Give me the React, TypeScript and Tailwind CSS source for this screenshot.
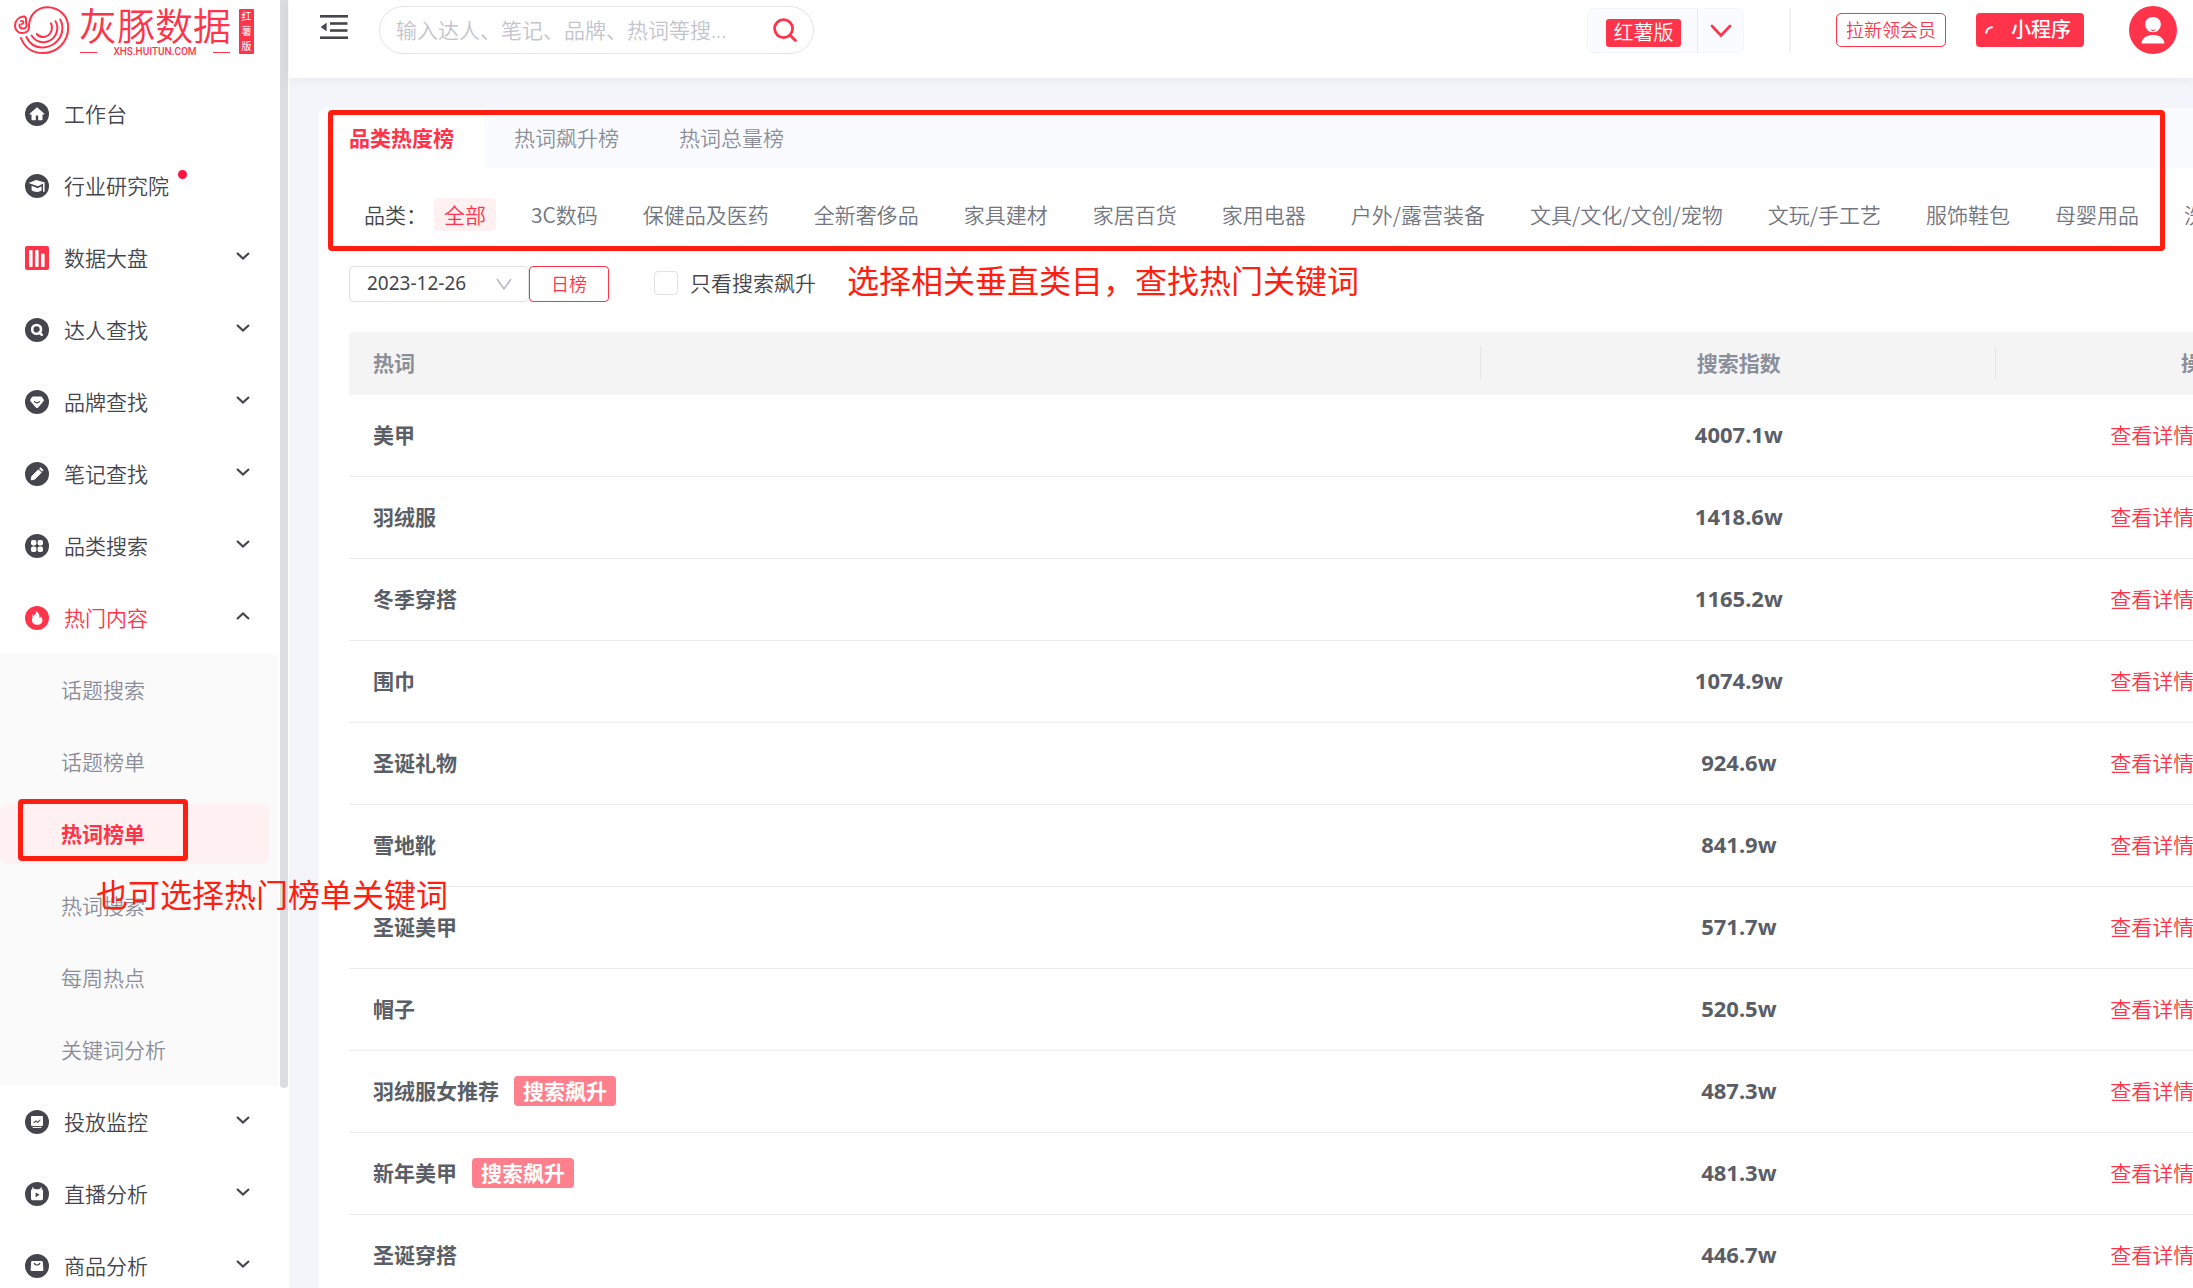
import React from "react";

type MenuItem = {
  label: string;
  icon: React.ReactNode;
  dot?: boolean;
  arrow?: boolean;
  children?: string[];
};

const Round = ({ color = "#45464d", children }: { color?: string; children: React.ReactNode }) => (
  <svg className="size-6 shrink-0" viewBox="0 0 24 24" fill="none">
    <circle cx="12" cy="12" r="12" fill={color} />
    {children}
  </svg>
);

const menu: MenuItem[] = [
  {
    label: "工作台",
    icon: (
      <Round>
        <path d="M12 5.2 4.9 11.4c-.4.5-.2 1 .4 1h1.2v4.8c0 .7.3 1 1 1h3.3v-4.7h2.4v4.7h3.3c.7 0 1-.3 1-1v-4.8h1.2c.6 0 .8-.5.4-1z" fill="#fff" />
      </Round>
    ),
  },
  {
    label: "行业研究院",
    dot: true,
    icon: (
      <Round>
        <path d="M3.6 9 11 6l9 2.6-7 3.6z" fill="#fff" />
        <path d="M6.6 11.8v4.4c2.6 2 7.4 2.4 10 .4v-4.4l-4 2z" fill="#fff" />
        <path d="M18.8 9.4v7.8" stroke="#fff" strokeWidth="1.6" strokeLinecap="round" />
      </Round>
    ),
  },
  {
    label: "数据大盘",
    arrow: true,
    icon: (
      <svg className="size-6 shrink-0" viewBox="0 0 24 24">
        <rect width="24" height="24" rx="2" fill="#ff3349" />
        <rect x="4" y="4" width="3.6" height="17" rx="1" fill="#fff" />
        <rect x="10" y="4" width="3.6" height="17" rx="1" fill="#fff" />
        <rect x="16" y="7.4" width="3.6" height="13.6" rx="1" fill="#fff" />
      </svg>
    ),
  },
  {
    label: "达人查找",
    arrow: true,
    icon: (
      <Round>
        <circle cx="11.6" cy="11.4" r="4.4" stroke="#fff" strokeWidth="2.6" />
        <path d="m14.4 14.4 2.4 2.4" stroke="#fff" strokeWidth="2.6" strokeLinecap="round" />
      </Round>
    ),
  },
  {
    label: "品牌查找",
    arrow: true,
    icon: (
      <Round>
        <path d="M8.2 6.4h7.6c.5 0 .9.2 1.2.6l1.6 2.6c.4.6.3 1.2-.1 1.7l-5.3 6.2c-.7.8-1.7.8-2.4 0l-5.3-6.2c-.4-.5-.5-1.1-.1-1.7L7 7c.3-.4.7-.6 1.2-.6z" fill="#fff" />
        <path d="M9.4 11.6c1.5 1.7 3.7 1.7 5.2 0" stroke="#45464d" strokeWidth="1.2" strokeLinecap="round" />
      </Round>
    ),
  },
  {
    label: "笔记查找",
    arrow: true,
    icon: (
      <Round>
        <path d="m6.2 17.8.6-3.4 6.6-6.6 2.8 2.8-6.6 6.6z" fill="#fff" stroke="#fff" strokeLinejoin="round" />
        <path d="m14.6 6.6 1-.8 2.4 2.4-.8 1z" fill="#fff" stroke="#fff" strokeLinejoin="round" />
      </Round>
    ),
  },
  {
    label: "品类搜索",
    arrow: true,
    icon: (
      <Round>
        <g fill="#fff">
          <rect x="6" y="6" width="5.4" height="5.4" rx="1.8" />
          <rect x="12.6" y="6" width="5.4" height="5.4" rx="1.8" />
          <rect x="6" y="12.6" width="5.4" height="5.4" rx="1.8" />
          <rect x="12.6" y="12.6" width="5.4" height="5.4" rx="1.8" />
        </g>
      </Round>
    ),
  },
  {
    label: "热门内容",
    arrow: true,
    icon: (
      <Round color="#ff3349">
        <path d="M11.2 5.2c.3 2.2-1.2 3.2-2.6 4.8-2.8 3.2-2.2 8.8 3.4 8.8s6.8-5 4-8.4c-.3.9-.7 1.4-1.5 1.6.4-2.8-.8-5.6-3.3-6.8z" fill="#fff" />
        <path d="M8.3 8.4c-.9.7-.9 1.5-.7 2.2" stroke="#fff" strokeLinecap="round" />
      </Round>
    ),
    children: ["话题搜索", "话题榜单", "热词榜单", "热词搜索", "每周热点", "关键词分析"],
  },
  {
    label: "投放监控",
    arrow: true,
    icon: (
      <Round>
        <rect x="6" y="6" width="12" height="10" rx="1" fill="#fff" />
        <path d="M8 17.4h8" stroke="#fff" strokeLinecap="round" />
        <path d="m9 12.6 2-1.6 1.8 1.4 2.2-2.4" stroke="#45464d" strokeWidth="1.1" strokeLinecap="round" strokeLinejoin="round" />
      </Round>
    ),
  },
  {
    label: "直播分析",
    arrow: true,
    icon: (
      <Round>
        <rect x="6" y="7.2" width="12" height="11" rx="1.4" fill="#fff" />
        <path d="m7.6 6 1.6 1.6M16.4 6l-1.6 1.6" stroke="#fff" strokeWidth="1.2" strokeLinecap="round" />
        <path d="m10.6 10.4 4 2.4-4 2.4z" fill="#45464d" />
      </Round>
    ),
  },
  {
    label: "商品分析",
    arrow: true,
    icon: (
      <Round>
        <path d="M7.2 7h9.6c.6 0 .9.3 1 .8l.6 8c0 .7-.3 1.1-1 1.1H6.6c-.7 0-1-.4-1-1.1l.6-8c.1-.5.4-.8 1-.8z" fill="#fff" />
        <path d="M9.2 9.2c.8 2.4 4.8 2.4 5.6 0" stroke="#45464d" strokeWidth="1.2" strokeLinecap="round" />
      </Round>
    ),
  },
];

const tabs = ["品类热度榜", "热词飙升榜", "热词总量榜"];

const categories = [
  "全部",
  "3C数码",
  "保健品及医药",
  "全新奢侈品",
  "家具建材",
  "家居百货",
  "家用电器",
  "户外/露营装备",
  "文具/文化/文创/宠物",
  "文玩/手工艺",
  "服饰鞋包",
  "母婴用品",
  "洗护",
];

const rows = [
  { word: "美甲", index: "4007.1w" },
  { word: "羽绒服", index: "1418.6w" },
  { word: "冬季穿搭", index: "1165.2w" },
  { word: "围巾", index: "1074.9w" },
  { word: "圣诞礼物", index: "924.6w" },
  { word: "雪地靴", index: "841.9w" },
  { word: "圣诞美甲", index: "571.7w" },
  { word: "帽子", index: "520.5w" },
  { word: "羽绒服女推荐", index: "487.3w", rising: true },
  { word: "新年美甲", index: "481.3w", rising: true },
  { word: "圣诞穿搭", index: "446.7w" },
];

function Chevron({ up }: { up?: boolean }) {
  return (
    <svg className="h-2 w-3.5" viewBox="0 0 14 8" fill="none" stroke="#45464d" strokeWidth="2.2">
      <path d={up ? "m1 7 6-5.5L13 7" : "m1 1 6 5.5L13 1"} />
    </svg>
  );
}

function Logo() {
  return (
    <a href="#" className="flex h-[78px] items-start pt-[6px] pl-3.5 text-[#ff3349]">
      {/* dolphin */}
      <svg className="h-12 w-14 shrink-0" viewBox="0 0 56 48" fill="none" stroke="currentColor" strokeWidth="2" strokeLinecap="round">
        <path d="M15 20.5C15 9 23 1.2 33.5 1.2 45 1.2 54.2 10 54.2 21.5 54.2 36 43 47 29 47 18 47 10.5 41 6.9 32" />
        <path d="M15 20.5c.4 4.5-3 6.5-7 6.5-4.2 0-7-3.4-7-7.2 0-5.3 3.6-8.6 8.6-9.2 2.2-.2 2.4 1.4 2.4 3.2v1.7c-.1 1.5.6 2.5.6 3.7 0 2-1.8 3.4-4 3.4-2.3 0-3.4-1.9-3-4" />
        <path d="M6.8 15.2c1.4-.8 2.8.1 2.6 1.5-.1 1-1 1.4-1.9 1.5" strokeWidth="1.8" />
        <path d="M12.4 31C15.5 38 21.7 41.6 29 41.4 41 41 49 31.5 48.4 20.5c-.2-2.5-1-5-2.2-7" />
        <path d="M17.6 29.5c3 4.8 7 7 12.4 6.7 8.5-.5 13.8-7.7 13.3-15.7-.2-2-.8-3.8-1.8-5.3" />
        <path d="M22.8 28c2.2 2.6 5 3.5 8.2 2.8 4.8-1 7.4-5.6 6.9-10.3-.2-1.3-.5-2.3-1-3.2" />
      </svg>
      <div className="ml-[10px] flex w-[150px] flex-col">
        <span className="-ml-px text-[38px] leading-[38px] font-[350] whitespace-nowrap">灰豚数据</span>
        <span className="mt-[3px] flex items-center justify-between font-['Roboto',sans-serif] text-[10px] leading-[10px] font-medium">
          <i className="h-px w-[17px] bg-current" />
          XHS.HUITUN.COM
          <i className="h-px w-[17px] bg-current" />
        </span>
      </div>
      <span className="mt-[3px] ml-[9px] flex h-[45px] w-[15px] flex-col items-center justify-around rounded-[1px] bg-[#ff3349] text-[10px] leading-[13px] text-white">
        <b className="font-normal">红</b>
        <b className="font-normal">薯</b>
        <b className="font-normal">版</b>
      </span>
    </a>
  );
}

function Sidebar() {
  return (
    <aside className="flex w-[289px] shrink-0 justify-between bg-white">
      <nav className="w-[278px]">
        <Logo />
        <ul>
          {menu.map((item) => (
            <li key={item.label}>
              <button className="flex h-[72px] w-full items-center pr-7 pl-[25px] text-left">
                {item.icon}
                <span className={`relative ml-[15px] ${item.children ? "text-[#ff3349]" : "text-[#45464d]"}`}>
                  {item.label}
                  {item.dot && <i className="absolute -top-px -right-[18px] size-[9px] rounded-full bg-[#ff1440]" />}
                </span>
                {item.arrow && (
                  <span className="ml-auto pb-1">
                    <Chevron up={!!item.children} />
                  </span>
                )}
              </button>
              {item.children && (
                <ul className="bg-[#fafafa]">
                  {item.children.map((child) =>
                    child === "热词榜单" ? (
                      <li key={child} className="relative py-[6px]">
                        <a href="#" className="flex h-[60px] w-[269px] items-center rounded-lg bg-[#fff0f1] pl-[61px] font-bold text-[#ff3349]">
                          {child}
                        </a>
                        <div className="pointer-events-none absolute top-px left-[18px] z-10 h-[62px] w-[170px] rounded-[4px] border-[5px] border-[#ff1e10]" />
                        <p className="pointer-events-none absolute top-[73px] left-24 z-10 text-[32px] leading-[48px] font-normal whitespace-nowrap text-[#ff1e10]">
                          也可选择热门榜单关键词
                        </p>
                      </li>
                    ) : (
                      <li key={child}>
                        <a href="#" className="flex h-[72px] items-center pl-[61px] text-[#8b8e99]">
                          {child}
                        </a>
                      </li>
                    )
                  )}
                </ul>
              )}
            </li>
          ))}
        </ul>
      </nav>
      {/* scroll thumb */}
      <div className="mr-px h-[84.5vh] w-2 rounded-b-full bg-[#dcdddf]" />
    </aside>
  );
}

function Topbar() {
  return (
    <header className="flex h-[78px] items-start bg-white pt-[6px] pr-4 pl-[31px] shadow-[0_2px_12px_rgba(30,35,60,0.06)]">
      <button aria-label="收起菜单" className="mt-[9px]">
        <svg className="h-6 w-7" viewBox="0 0 28 24" fill="#45464d">
          <rect width="28" height="2.6" />
          <rect x="10" y="7.2" width="17.5" height="2.6" />
          <rect x="10" y="14.2" width="17.5" height="2.6" />
          <rect y="21.4" width="28" height="2.6" />
          <path d="M.6 12 6.6 7.8v8.4z" />
        </svg>
      </button>
      <form className="ml-[31px] flex h-12 w-[435px] items-center rounded-full border border-[#e4e5e8] pr-4 pl-4">
        <input
          type="text"
          aria-label="搜索"
          placeholder="输入达人、笔记、品牌、热词等搜..."
          className="min-w-0 flex-1 outline-none placeholder:text-[#c3c4cc]"
        />
        <button type="button" aria-label="搜索">
          <svg className="size-6" viewBox="0 0 24 24" fill="none" stroke="#ff3349" strokeWidth="2.8" strokeLinecap="round">
            <circle cx="10.6" cy="10.6" r="9" />
            <path d="m17.4 17.4 5 5" />
          </svg>
        </button>
      </form>
      <div className="mt-[2px] ml-auto flex h-[45px] w-[157px] rounded-md border border-[#f4f5f9] bg-[#fafbff]">
        <div className="flex flex-1 items-start justify-end border-r border-[#e8e9ee] pt-[10px] pr-4">
          <span className="h-7 w-[75px] rounded-[3px] bg-[#ff3349] text-center text-[20px] leading-7 text-white">红薯版</span>
        </div>
        <button aria-label="切换版本" className="flex w-[45px] items-center justify-center">
          <svg className="h-3.5 w-[22px]" viewBox="0 0 22 14" fill="none" stroke="#ff3349" strokeWidth="2.6" strokeLinecap="round">
            <path d="m2 2 9 9.5L20 2" />
          </svg>
        </button>
      </div>
      <i className="mt-[2px] ml-[45px] h-[45px] w-0.5 bg-[#f2f2f4]" />
      <button className="mt-[7px] ml-[45px] h-[34px] w-[110px] rounded-[5px] border border-[#ff3349] text-[18px] leading-8 text-[#ff3349]">拉新领会员</button>
      <button className="mt-[7px] ml-[30px] flex h-[34px] w-[108px] items-center justify-between rounded-[4px] bg-[#ff3349] pr-[13px] pl-[9px] text-[20px] leading-[34px] font-medium text-white">
        <svg className="size-2" viewBox="0 0 8 8" fill="none" stroke="#fff" strokeWidth="2" strokeLinecap="round">
          <path d="M1.2 7C1.5 4 3.6 1.6 7 1.2" />
        </svg>
        小程序
      </button>
      <button aria-label="个人中心" className="ml-[45px]">
        <svg className="size-12" viewBox="0 0 48 48">
          <circle cx="24" cy="24" r="24" fill="#ff3349" />
          <path d="M24 11c-4.6 0-7.8 3-7.8 7.2 0 4.7 3.5 8 7.8 8s7.8-3.3 7.8-8C31.8 14 28.6 11 24 11z" fill="#fff" />
          <path d="M21.4 23c1.6 1.3 3.6 1.3 5.2 0-.5 1.4-1.4 2-2.6 2s-2.1-.6-2.6-2z" fill="#ff3349" />
          <path d="M12.6 36.2C14 31.5 18.4 29 24 29s10 2.5 11.4 7.2c.2.8-.3 1.3-1.1 1.3H13.7c-.8 0-1.3-.5-1.1-1.3z" fill="#fff" />
        </svg>
      </button>
    </header>
  );
}

function Filters() {
  return (
    <div className="flex h-9 items-center">
      <div className="relative">
        <select aria-label="日期" className="h-9 w-[180px] appearance-none rounded-[4px] border border-[#e0e1e4] bg-white pb-[2px] pl-[17px] text-[19px] leading-8 font-normal text-[#45464d]">
          <option>2023-12-26</option>
        </select>
        <svg className="pointer-events-none absolute top-3 right-[17px] h-3 w-4" viewBox="0 0 16 12" fill="none" stroke="#b8b9bd" strokeWidth="1.5">
          <path d="m1 1 7 10L15 1" />
        </svg>
      </div>
      <button className="h-9 w-20 rounded-[4px] border border-[#ff3349] pb-px text-[18px] leading-8 text-[#ff3349]">日榜</button>
      <label className="ml-[45px] flex items-center gap-3 pb-[2px] text-[#45464d]">
        <input type="checkbox" className="size-6 appearance-none rounded-[4px] border border-[#e0e1e4] bg-white" />
        只看搜索飙升
      </label>
      <p className="ml-[31px] pb-[6px] text-[32px] leading-9 font-normal whitespace-nowrap text-[#ff1e10]">选择相关垂直类目，查找热门关键词</p>
    </div>
  );
}

function HotWords() {
  return (
    <table className="mt-[30px] w-full min-w-[2059px] table-fixed border-separate border-spacing-0">
      <thead>
        <tr className="text-[#8b8f99]">
          <th className="relative h-[63px] w-[55%] rounded-tl-[4px] bg-[#f4f4f5] pb-[2px] pl-6 text-left font-bold">
            热词
            <i className="absolute top-3.5 right-0 h-[34px] w-px bg-[#e6e6e9]" />
          </th>
          <th className="relative w-[25%] bg-[#f4f4f5] pb-[2px] font-bold">
            搜索指数
            <i className="absolute top-3.5 right-0 h-[34px] w-px bg-[#e6e6e9]" />
          </th>
          <th className="w-[20%] bg-[#f4f4f5] pb-[2px] font-bold">操作</th>
        </tr>
      </thead>
      <tbody>
        {rows.map((row) => (
          <tr key={row.word} className="font-bold text-[#5a5e66]">
            <td className="h-[82px] border-b border-[#ededef] pb-[2px] pl-6">
              <span className="flex items-center gap-[15px]">
                {row.word}
                {row.rising && <em className="rounded-[4px] bg-[#ff7f8c] px-[9px] leading-[30px] text-white not-italic">搜索飙升</em>}
              </span>
            </td>
            <td className="border-b border-[#ededef] pb-1 text-center text-[22px]">{row.index}</td>
            <td className="border-b border-[#ededef] pb-[2px] pl-[114px] font-[350]">
              <a href="#" className="text-[#ff3349]">查看详情</a>
            </td>
          </tr>
        ))}
      </tbody>
    </table>
  );
}

export default function App() {
  return (
    <div className="flex h-screen overflow-hidden bg-[#f4f5fa] font-['Noto_Sans','Noto_Sans_CJK_SC',sans-serif] text-[21px] leading-[30px] font-[350]">
      <Sidebar />
      <main className="min-w-0 flex-1">
        <Topbar />
        <section className="mt-[30px] ml-[30px] rounded-tl-lg bg-white">
          <div className="relative pb-[35px]">
            <div className="flex h-[60px] rounded-tl-lg bg-[#fafbff]">
              {tabs.map((tab, i) => (
                <button
                  key={tab}
                  className={i === 0 ? "rounded-tl-lg bg-white px-[30px] font-bold text-[#ff3349]" : "px-[30px] text-[#8b8f99]"}
                >
                  {tab}
                </button>
              ))}
            </div>
            <div className="mt-[30px] flex overflow-hidden pl-[45px] font-['Noto_Sans_CJK_SC',sans-serif] leading-[33px] whitespace-nowrap">
              <span className="mr-[7px] shrink-0 text-[#45464d]">品类：</span>
              <div className="flex gap-[25px]">
                {categories.map((name, i) => (
                  <button
                    key={name}
                    className={i === 0 ? "rounded-[4px] bg-[#fff0f1] px-[10px] text-[#ff3349]" : "px-[10px] text-[#73767f]"}
                  >
                    {name}
                  </button>
                ))}
              </div>
            </div>
            <div className="pointer-events-none absolute top-[2px] right-7 left-[9px] h-[141px] rounded-[4px] border-[5px] border-[#ff1e10]" />
          </div>
          <div className="pl-[30px]">
            <Filters />
            <HotWords />
          </div>
        </section>
      </main>
    </div>
  );
}
